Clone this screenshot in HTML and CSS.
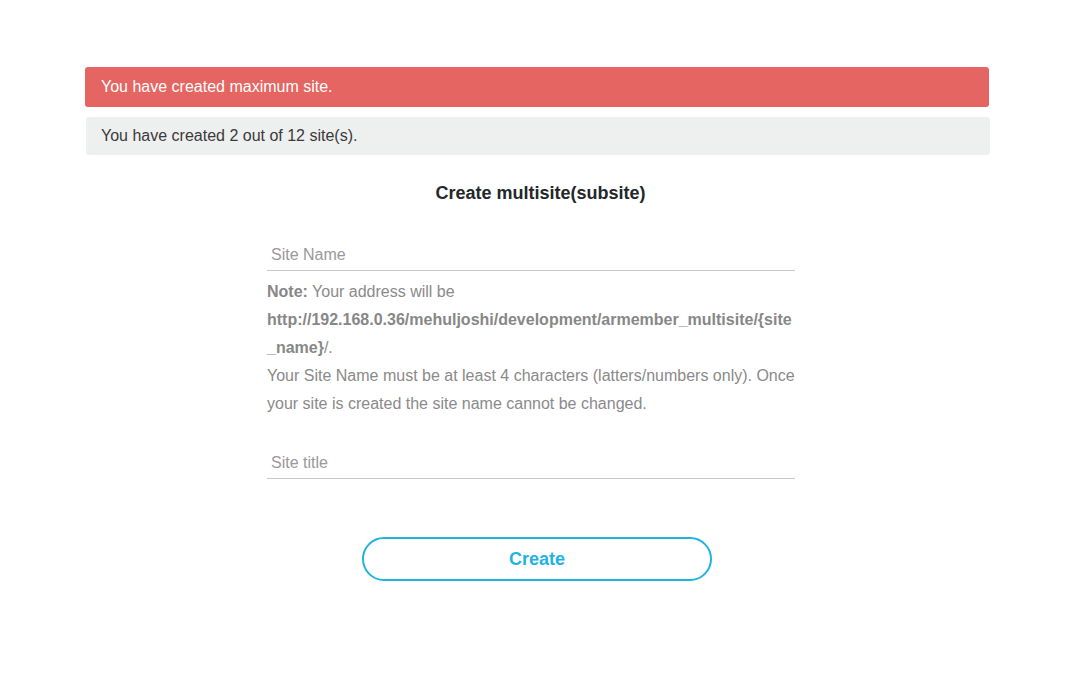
FILE: index.html
```html
<!DOCTYPE html>
<html>
<head>
<meta charset="utf-8">
<link rel="stylesheet" href="styles.css">
</head>
<body>
<div class="wrap">
  <div class="alert alert-error">You have created maximum site.</div>
  <div class="alert alert-info">You have created 2 out of 12 site(s).</div>
  <h2 class="title">Create multisite(subsite)</h2>
  <form class="form">
    <input class="field" type="text" placeholder="Site Name">
    <div class="note">
      <b>Note:</b> Your address will be <b>http://192.168.0.36/mehuljoshi/development/armember_multisite/{site_name}</b>/.<br>
      Your Site Name must be at least 4 characters (latters/numbers only). Once your site is created the site name cannot be changed.
    </div>
    <input class="field field-title" type="text" placeholder="Site title">
  </form>
  <div class="actions">
    <button class="btn" type="button">Create</button>
  </div>
</div>
</body>
</html>
```

FILE: styles.css
```css
html, body {
  margin: 0;
  padding: 0;
  background: #fff;
  font-family: "Liberation Sans", Arial, sans-serif;
}
.wrap {
  width: 905px;
  padding: 67px 0 0 85px;
}
.alert {
  font-size: 16px;
  border-radius: 3px;
  box-sizing: border-box;
  padding: 0 16px;
  display: flex;
  align-items: center;
}
.alert-error {
  width: 904px;
  height: 40px;
  background: #e46561;
  color: #fff;
}
.alert-info {
  width: 904px;
  height: 38px;
  margin: 10px 0 0 1px;
  background: #eeefef;
  color: #3a3a3a;
  padding-left: 15px;
}
.title {
  margin: 26px 0 0 0;
  font-size: 18px;
  line-height: 24px;
  font-weight: bold;
  color: #23272b;
  text-align: center;
  padding-left: 6px;
}
.form {
  width: 528px;
  margin: 33px 0 0 182px;
}
.field {
  display: block;
  width: 100%;
  box-sizing: border-box;
  height: 33px;
  border: 0;
  border-bottom: 1px solid #c8c8c8;
  outline: none;
  padding: 2px 4px 0;
  font-family: "Liberation Sans", Arial, sans-serif;
  font-size: 16px;
  color: #333;
  background: transparent;
}
.field::placeholder {
  color: #999;
}
.note {
  margin-top: 7px;
  font-size: 16px;
  line-height: 28px;
  color: #8a8a8a;
  overflow-wrap: break-word;
}
.note b {
  color: #878787;
}
.field-title {
  margin-top: 28px;
}
.actions {
  margin: 58px 0 0 277px;
}
.btn {
  width: 350px;
  height: 44px;
  border: 2px solid #1fb3e2;
  border-radius: 22px;
  background: #fff;
  color: #1fb3e2;
  font-family: "Liberation Sans", Arial, sans-serif;
  font-size: 18px;
  font-weight: bold;
  cursor: pointer;
}
```
